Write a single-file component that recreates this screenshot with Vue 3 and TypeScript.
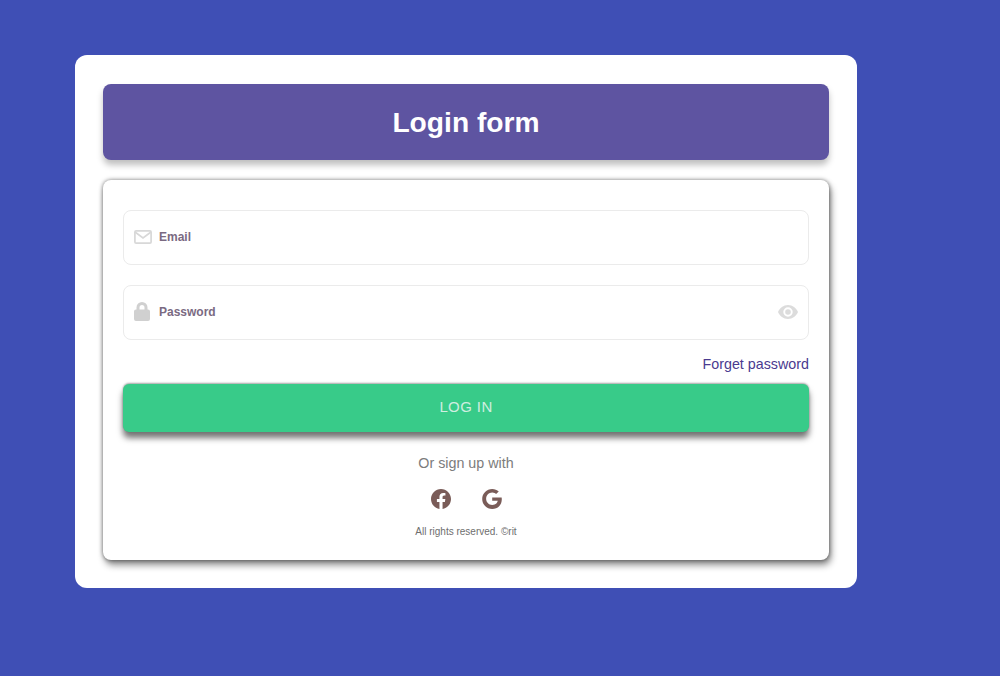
<script setup lang="ts">
import { ref } from 'vue'

const email = ref('')
const password = ref('')
</script>

<template>
  <div class="page">
    <div class="wrapper">
      <header class="title-bar">
        <h1>Login form</h1>
      </header>
      <form class="form-card" @submit.prevent>
        <label class="field">
          <svg class="field-icon" width="18" height="14" viewBox="0 0 18 14" fill="none" stroke="#d8d8d8" stroke-width="1.7">
            <rect x="0.9" y="0.9" width="16.2" height="12.2" rx="1.2" />
            <path d="M1 2l8 6 8-6" />
          </svg>
          <span class="field-label">Email</span>
          <input v-model="email" type="email" />
        </label>
        <label class="field">
          <svg class="field-icon" width="16" height="19" viewBox="0 0 16 19" fill="#d0d0d0">
            <path d="M8 0a5.500 5.500 0 0 0-5.500 5.500V7.500H2a2 2 0 0 0-2 2V17a2 2 0 0 0 2 2h12a2 2 0 0 0 2-2V9.500a2 2 0 0 0-2-2h-.5V5.500A5.500 5.500 0 0 0 8 0zm2.500 7.500h-5V5.500a2.500 2.500 0 0 1 5 0z" fill-rule="evenodd" />
          </svg>
          <span class="field-label">Password</span>
          <input v-model="password" type="password" />
          <svg class="eye" width="20" height="14" viewBox="0 0 20 14" fill="#dcdcdc">
            <path d="M10 0C5.500 0 1.700 2.900 0 7c1.700 4.100 5.500 7 10 7s8.300-2.900 10-7c-1.700-4.100-5.500-7-10-7zm0 11.700A4.700 4.700 0 1 1 10 2.300a4.700 4.700 0 0 1 0 9.400zm0-7.500a2.800 2.800 0 1 0 0 5.600 2.800 2.800 0 0 0 0-5.600z" fill-rule="evenodd" />
          </svg>
        </label>
        <div class="forget"><a href="#">Forget password</a></div>
        <button class="submit" type="submit">LOG IN</button>
        <p class="signup">Or sign up with</p>
        <div class="socials">
          <svg width="20" height="20" viewBox="0 0 24 24" fill="#7a5c58">
            <path d="M24 12.070C24 5.400 18.630 0 12 0S0 5.400 0 12.070c0 6.030 4.390 11.020 10.130 11.930v-8.440H7.080v-3.490h3.050V9.410c0-3.020 1.790-4.690 4.530-4.690 1.310 0 2.680.24 2.680.24v2.970h-1.510c-1.490 0-1.960.93-1.960 1.880v2.260h3.330l-.53 3.490h-2.800V24C19.610 23.090 24 18.100 24 12.070z" />
          </svg>
          <svg width="20" height="20" viewBox="0 0 24 24" fill="#7a5c58">
            <path d="M12.240 10.100v4h6.660c-.28 1.720-2 5.040-6.660 5.040-4.010 0-7.280-3.320-7.280-7.420s3.270-7.420 7.280-7.420c2.280 0 3.810.97 4.680 1.810l3.190-3.070C18.060 1.120 15.400 0 12.240 0 5.600 0 .24 5.370.24 12s5.360 12 12 12c6.930 0 11.520-4.870 11.520-11.730 0-.79-.08-1.390-.19-2.170z" />
          </svg>
        </div>
        <p class="rights">All rights reserved. ©rit</p>
      </form>
    </div>
  </div>
</template>

<style scoped>
.page {
  min-height: 676px;
  box-sizing: border-box;
  padding: 55px 143px 0 75px;
  background: #3f4fb5;
  font-family: "Liberation Sans", Arial, sans-serif;
}

.wrapper {
  box-sizing: border-box;
  height: 533px;
  padding: 29px 28px;
  background: #fff;
  border-radius: 12px;
}

.title-bar {
  height: 76px;
  display: flex;
  align-items: center;
  justify-content: center;
  background: #5e54a1;
  border-radius: 8px;
  box-shadow: 0 5px 6px rgba(0, 0, 0, 0.25);
}

.title-bar h1 {
  margin: 0;
  color: #fff;
  font-size: 28.200px;
  font-weight: 700;
}

.form-card {
  box-sizing: border-box;
  height: 380px;
  margin-top: 20px;
  padding: 30px 20px 0;
  background: #fff;
  border-radius: 8px;
  box-shadow: 0 0 4px rgba(0, 0, 0, 0.5), 2px 5px 7px rgba(0, 0, 0, 0.45);
}

.field {
  box-sizing: border-box;
  height: 55px;
  margin-bottom: 20px;
  padding: 0 11px 0 10px;
  display: flex;
  align-items: center;
  border: 1px solid #ebebeb;
  border-radius: 8px;
}

.field-icon {
  flex: none;
  margin-top: -2px;
}

.field-label {
  position: absolute;
  margin: -2px 0 0 25px;
  color: #7a6a82;
  font-size: 12px;
  font-weight: 700;
}

.field input {
  flex: 1;
  min-width: 0;
  border: 0;
  outline: 0;
  background: transparent;
}

.eye {
  flex: none;
  margin: -2px -1px 0 0;
}

.forget {
  margin-top: -5px;
  text-align: right;
  font-size: 14.300px;
  line-height: 18px;
}

.forget a {
  color: #4a3a8f;
  text-decoration: none;
}

.submit {
  display: block;
  width: 100%;
  height: 48px;
  margin-top: 11px;
  padding: 0 0 4px;
  border: 0;
  border-radius: 6px;
  background: #38cb89;
  color: #cfeee0;
  font-family: inherit;
  font-size: 15px;
  letter-spacing: 0.4px;
  box-shadow: 0 -1px 2px rgba(0, 0, 0, 0.35), 0 6px 6px rgba(0, 0, 0, 0.55);
}

.signup {
  margin: 22px 0 0;
  color: #7c7c7c;
  font-size: 14.300px;
  line-height: 18px;
  text-align: center;
}

.socials {
  display: flex;
  justify-content: center;
  gap: 31px;
  margin-top: 17px;
}

.socials svg {
  display: block;
}

.rights {
  margin: 17px 0 0;
  color: #6e6e6e;
  font-size: 10px;
  line-height: 12px;
  text-align: center;
}
</style>
